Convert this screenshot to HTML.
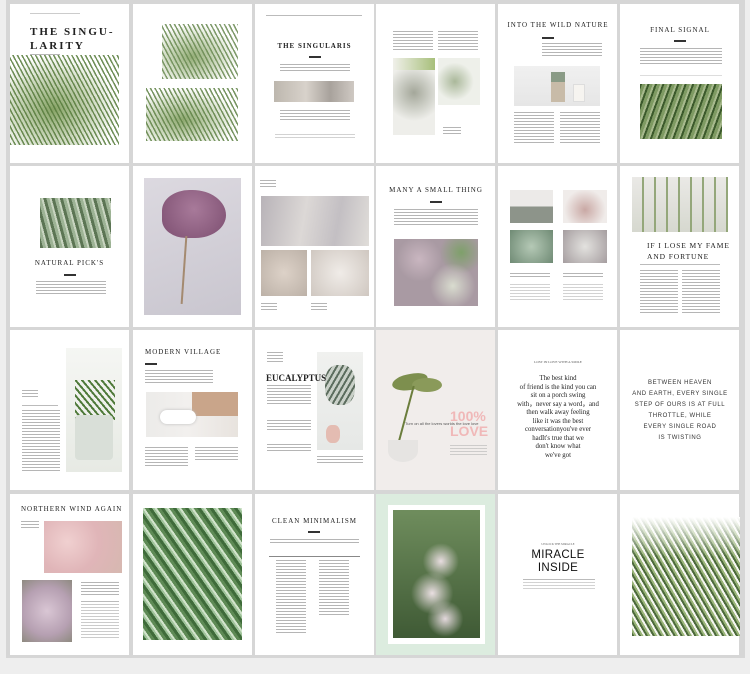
<!DOCTYPE html>
<html><head><meta charset="utf-8"><style>
*{margin:0;padding:0;box-sizing:border-box}
body{width:750px;height:689px;position:relative;background:#fff;overflow:hidden;font-family:"Liberation Serif",serif;color:#222}
div{position:absolute}
.p{background:#fff;width:119px}
.t{background:repeating-linear-gradient(#b5b5b5 0 1px,transparent 1px 3px)}
.b{background:#333;height:2px;width:12px}
.h{font-size:7px;letter-spacing:1px;text-align:center;white-space:nowrap;font-weight:bold}
.l{background:#bbb;height:1px}
.palm{background:
 repeating-linear-gradient(62deg,rgba(70,110,40,.85) 0 1.5px,transparent 1.5px 4px),
 radial-gradient(ellipse at 40% 60%,#7a9a55 0,#fff 70%);}
</style></head><body>
<div style="left:0;top:0;width:750px;height:674px;background:#eeeeee"></div>
<div style="left:6px;top:0;width:739px;height:658px;background:#d6d6d6"></div>

<!-- Row 1 -->
<div class="p" style="left:10px;top:4px;height:159px"></div>
<div style="left:30px;top:13px;width:50px;height:1px;background:#ccc"></div>
<div style="left:30px;top:25px;font-size:11px;letter-spacing:2px;line-height:14px;font-weight:bold">THE SINGU-<br>LARITY</div>
<div class="t" style="left:30px;top:54px;width:30px;height:2px"></div>
<div class="palm" style="left:10px;top:55px;width:109px;height:90px;opacity:.9"></div>

<div class="p" style="left:133px;top:4px;height:159px"></div>
<div class="palm" style="left:162px;top:24px;width:76px;height:55px;opacity:.8"></div>
<div class="palm" style="left:146px;top:88px;width:92px;height:53px;opacity:.85"></div>

<div class="p" style="left:255px;top:4px;height:159px"></div>
<div class="l" style="left:266px;top:15px;width:96px"></div>
<div class="h" style="left:255px;top:42px;width:119px">THE SINGULARIS</div>
<div class="b" style="left:309px;top:56px"></div>
<div class="t" style="left:280px;top:64px;width:70px;height:9px"></div>
<div style="left:274px;top:81px;width:80px;height:21px;background:linear-gradient(90deg,#bdb7ae,#d8d2cb 40%,#a8a29c 70%,#cfc9c3)"></div>
<div class="t" style="left:280px;top:110px;width:70px;height:12px"></div>
<div class="t" style="left:275px;top:134px;width:80px;height:4px;opacity:.6"></div>

<div class="p" style="left:376px;top:4px;height:159px"></div>
<div class="t" style="left:393px;top:31px;width:40px;height:20px"></div>
<div class="t" style="left:438px;top:31px;width:40px;height:20px"></div>
<div style="left:393px;top:58px;width:42px;height:77px;background:radial-gradient(circle at 50% 45%,#a4a79a 0,#c9cbc2 30%,#eeeeea 60%),#eee"></div>
<div style="left:393px;top:58px;width:42px;height:12px;background:linear-gradient(90deg,#f0f0ea,#a7bf7a)"></div>
<div style="left:438px;top:58px;width:42px;height:47px;background:radial-gradient(circle at 40% 50%,#aab89a 0,#eef0ea 55%)"></div>
<div class="t" style="left:443px;top:127px;width:18px;height:8px"></div>

<div class="p" style="left:498px;top:4px;height:159px"></div>
<div class="h" style="left:498px;top:21px;width:120px;font-weight:normal">INTO THE WILD NATURE</div>
<div class="b" style="left:542px;top:37px"></div>
<div class="t" style="left:542px;top:43px;width:60px;height:14px"></div>
<div style="left:514px;top:66px;width:86px;height:40px;background:linear-gradient(#f0f0f0,#e6e6e6)"></div>
<div style="left:551px;top:80px;width:14px;height:22px;background:#c8bba8"></div>
<div style="left:551px;top:72px;width:14px;height:10px;background:#8a9b86"></div>
<div style="left:573px;top:84px;width:12px;height:18px;background:#f6f4f0;border:1px solid #ddd"></div>
<div class="t" style="left:514px;top:112px;width:40px;height:31px"></div>
<div class="t" style="left:560px;top:112px;width:40px;height:31px"></div>

<div class="p" style="left:620px;top:4px;height:159px"></div>
<div class="h" style="left:620px;top:26px;width:120px;font-weight:normal">FINAL SIGNAL</div>
<div class="b" style="left:674px;top:40px"></div>
<div class="t" style="left:640px;top:48px;width:82px;height:16px"></div>
<div class="l" style="left:640px;top:75px;width:82px;background:#ddd"></div>
<div style="left:640px;top:84px;width:82px;height:55px;background:repeating-linear-gradient(110deg,#3c5a2c 0 2px,#7e9a62 2px 5px,#a7b98d 5px 7px)"></div>

<!-- Row 2 -->
<div class="p" style="left:10px;top:166px;height:161px"></div>
<div style="left:40px;top:198px;width:71px;height:50px;background:repeating-linear-gradient(75deg,#5c7554 0 3px,#9db395 3px 6px,#c8d4c0 6px 8px)"></div>
<div class="h" style="left:10px;top:259px;width:119px;font-weight:normal">NATURAL PICK'S</div>
<div class="b" style="left:64px;top:274px"></div>
<div class="t" style="left:36px;top:281px;width:70px;height:14px"></div>

<div class="p" style="left:133px;top:166px;height:161px"></div>
<div style="left:144px;top:178px;width:97px;height:137px;background:linear-gradient(160deg,#dcd9e0,#c9c6cf)"></div>
<div style="left:162px;top:190px;width:64px;height:48px;border-radius:45% 55% 50% 40%;background:radial-gradient(circle at 50% 40%,#a87a9a,#7c4e70)"></div>
<div style="left:183px;top:236px;width:2px;height:68px;background:#a48a70;transform:rotate(4deg)"></div>

<div class="p" style="left:255px;top:166px;height:161px"></div>
<div class="t" style="left:260px;top:180px;width:16px;height:8px"></div>
<div style="left:261px;top:196px;width:108px;height:50px;background:linear-gradient(100deg,#b8b3b8,#dcd8d6 40%,#c3bfc3 70%,#e0ddd9)"></div>
<div style="left:261px;top:250px;width:46px;height:46px;background:radial-gradient(circle,#ddd2c8,#bcb1a7)"></div>
<div style="left:311px;top:250px;width:58px;height:46px;background:radial-gradient(circle,#f0ece8,#cfc7c0)"></div>
<div class="t" style="left:261px;top:303px;width:16px;height:8px"></div>
<div class="t" style="left:311px;top:303px;width:16px;height:8px"></div>

<div class="p" style="left:376px;top:166px;height:161px"></div>
<div class="h" style="left:376px;top:186px;width:120px;font-weight:normal">MANY A SMALL THING</div>
<div class="b" style="left:430px;top:201px"></div>
<div class="t" style="left:394px;top:209px;width:84px;height:18px"></div>
<div style="left:394px;top:239px;width:84px;height:67px;background:radial-gradient(circle at 30% 30%,#c9b6c0 0,transparent 30%),radial-gradient(circle at 70% 70%,#d9dccf 0,transparent 30%),radial-gradient(circle at 80% 20%,#7ea06a 0,transparent 25%),#a99aa3"></div>

<div class="p" style="left:498px;top:166px;height:161px"></div>
<div style="left:510px;top:190px;width:43px;height:33px;background:linear-gradient(#eceae8 50%,#8d948a 50%)"></div>
<div style="left:563px;top:190px;width:44px;height:33px;background:radial-gradient(circle at 50% 60%,#c9a8a4,#f0ecea 70%)"></div>
<div style="left:510px;top:230px;width:43px;height:33px;background:radial-gradient(circle,#b5c9b6,#6f8a74)"></div>
<div style="left:563px;top:230px;width:44px;height:33px;background:radial-gradient(circle,#e3e2df,#a59d9f)"></div>
<div class="t" style="left:510px;top:273px;width:40px;height:5px"></div>
<div class="t" style="left:563px;top:273px;width:40px;height:5px"></div>
<div class="t" style="left:510px;top:284px;width:40px;height:16px;opacity:.6"></div>
<div class="t" style="left:563px;top:284px;width:40px;height:16px;opacity:.6"></div>

<div class="p" style="left:620px;top:166px;height:161px"></div>
<div style="left:632px;top:177px;width:96px;height:55px;background:linear-gradient(#eae9e6,#d6d8cf);"></div>
<div style="left:632px;top:177px;width:96px;height:55px;background:repeating-linear-gradient(90deg,transparent 0 10px,#94a77a 10px 12px)"></div>
<div style="left:647px;top:240px;font-size:7.5px;letter-spacing:.9px;line-height:11px">IF I LOSE MY FAME<br>AND FORTUNE</div>
<div class="l" style="left:640px;top:264px;width:80px"></div>
<div class="t" style="left:640px;top:270px;width:38px;height:43px"></div>
<div class="t" style="left:682px;top:270px;width:38px;height:43px"></div>

<!-- Row 3 -->
<div class="p" style="left:10px;top:330px;height:160px"></div>
<div style="left:66px;top:348px;width:56px;height:124px;background:linear-gradient(#f5f6f3,#e7eae4)"></div>
<div style="left:75px;top:380px;width:40px;height:40px;background:repeating-linear-gradient(50deg,#4f7a3a 0 2px,transparent 2px 5px)"></div>
<div style="left:75px;top:415px;width:38px;height:45px;background:#d9dfd8;border-radius:4px"></div>
<div class="t" style="left:22px;top:390px;width:16px;height:7px"></div>
<div class="l" style="left:22px;top:405px;width:36px"></div>
<div class="t" style="left:22px;top:410px;width:38px;height:62px"></div>

<div class="p" style="left:133px;top:330px;height:160px"></div>
<div class="h" style="left:145px;top:348px;font-weight:normal;text-align:left">MODERN VILLAGE</div>
<div class="b" style="left:145px;top:363px"></div>
<div class="t" style="left:145px;top:370px;width:68px;height:13px"></div>
<div style="left:146px;top:392px;width:92px;height:45px;background:linear-gradient(90deg,#ecebe9,#f2f0ee 45%,#e8e3de)"></div>
<div style="left:192px;top:392px;width:46px;height:24px;background:#c9a58a"></div>
<div style="left:160px;top:410px;width:36px;height:14px;background:#fff;border-radius:7px;box-shadow:0 0 3px #bbb"></div>
<div class="t" style="left:145px;top:447px;width:43px;height:20px"></div>
<div class="t" style="left:195px;top:447px;width:43px;height:14px"></div>

<div class="p" style="left:255px;top:330px;height:160px"></div>
<div class="t" style="left:267px;top:352px;width:16px;height:10px"></div>
<div style="left:317px;top:352px;width:46px;height:98px;background:linear-gradient(#f0f1ef,#e6e8e6)"></div>
<div style="left:325px;top:365px;width:30px;height:40px;background:repeating-linear-gradient(120deg,#5d6e5f 0 2px,#c9d0c8 2px 5px);border-radius:40%"></div>
<div style="left:326px;top:425px;width:14px;height:18px;background:#e4bcb2;border-radius:40%"></div>
<div style="left:266px;top:373px;font-size:9px;font-weight:bold">EUCALYPTUS</div>
<div class="t" style="left:267px;top:385px;width:44px;height:21px"></div>
<div class="t" style="left:267px;top:420px;width:44px;height:10px"></div>
<div class="t" style="left:267px;top:444px;width:44px;height:8px"></div>
<div class="t" style="left:317px;top:456px;width:46px;height:8px"></div>

<div class="p" style="left:376px;top:330px;height:160px;background:#f1edeb"></div>
<div style="left:392px;top:374px;width:36px;height:16px;background:#7d8f4e;border-radius:60% 40% 50% 50%;transform:rotate(-8deg)"></div>
<div style="left:412px;top:378px;width:30px;height:14px;background:#8a9a5a;border-radius:50%"></div>
<div style="left:405px;top:385px;width:2px;height:60px;background:#6b7d3c;transform:rotate(15deg)"></div>
<div style="left:388px;top:440px;width:30px;height:22px;border-radius:0 0 50% 50%;background:#e6e4e2"></div>
<div style="left:450px;top:409px;font-family:'Liberation Sans',sans-serif;font-weight:bold;font-size:14px;line-height:15px;color:#f0b8b8">100%<br>LOVE</div>
<div style="left:405px;top:421px;font-family:'Liberation Sans',sans-serif;font-size:4px;color:#555;white-space:nowrap">Turn on all the lovers worlds the love love</div>
<div class="t" style="left:450px;top:445px;width:37px;height:10px;opacity:.6"></div>

<div class="p" style="left:498px;top:330px;height:160px"></div>
<div style="left:498px;top:360px;width:120px;text-align:center;font-size:3.5px;color:#555">LOST IN LOVE WITH A SMILE</div>
<div style="left:498px;top:375px;width:120px;text-align:center;font-size:6.8px;line-height:8.5px;color:#222">The best kind<br>of friend is the kind you can<br>sit on a porch swing<br>with，never say a word，and<br>then walk away feeling<br>like it was the best<br>conversationyou've ever<br>hadIt's true that we<br>don't know what<br>we've got</div>

<div class="p" style="left:620px;top:330px;height:160px"></div>
<div style="left:620px;top:378px;width:120px;text-align:center;font-family:'Liberation Sans',sans-serif;font-size:6px;letter-spacing:.6px;line-height:11px;color:#333">BETWEEN HEAVEN<br>AND EARTH, EVERY SINGLE<br>STEP OF OURS IS AT FULL<br>THROTTLE, WHILE<br>EVERY SINGLE ROAD<br>IS TWISTING</div>

<!-- Row 4 -->
<div class="p" style="left:10px;top:494px;height:161px"></div>
<div class="h" style="left:21px;top:505px;font-weight:normal;text-align:left">NORTHERN WIND AGAIN</div>
<div class="t" style="left:21px;top:521px;width:18px;height:8px"></div>
<div style="left:44px;top:521px;width:78px;height:52px;background:radial-gradient(circle at 30% 40%,#f0d0d0,#e0b5b8 50%,#d6b8b0)"></div>
<div style="left:22px;top:580px;width:50px;height:62px;background:radial-gradient(circle at 50% 50%,#d9c6d4,#b6a0b2 60%,#8e8a80)"></div>
<div class="t" style="left:81px;top:582px;width:38px;height:14px"></div>
<div class="l" style="left:81px;top:601px;width:38px"></div>
<div class="t" style="left:81px;top:604px;width:38px;height:36px;opacity:.7"></div>

<div class="p" style="left:133px;top:494px;height:161px"></div>
<div style="left:143px;top:508px;width:99px;height:132px;background:repeating-linear-gradient(55deg,#3f6b3a 0 3px,#9fc39a 3px 5px,#d2e4cc 5px 7px,#5e8a55 7px 10px)"></div>

<div class="p" style="left:255px;top:494px;height:161px"></div>
<div class="h" style="left:255px;top:517px;width:119px;font-weight:normal">CLEAN MINIMALISM</div>
<div class="b" style="left:308px;top:531px"></div>
<div class="t" style="left:270px;top:539px;width:89px;height:5px"></div>
<div class="l" style="left:269px;top:556px;width:91px;background:#888"></div>
<div class="t" style="left:276px;top:560px;width:30px;height:75px"></div>
<div class="t" style="left:319px;top:560px;width:30px;height:55px"></div>

<div class="p" style="left:376px;top:494px;height:161px;background:#dcecdf"></div>
<div style="left:388px;top:505px;width:97px;height:139px;background:#fff"></div>
<div style="left:393px;top:510px;width:87px;height:128px;background:radial-gradient(circle at 55% 40%,#e8dde0 0,transparent 20%),radial-gradient(circle at 45% 65%,#eadfe2 0,transparent 22%),radial-gradient(circle at 60% 85%,#e3d8dc 0,transparent 15%),linear-gradient(#6f8d5d,#3f5a35)"></div>

<div class="p" style="left:498px;top:494px;height:161px"></div>
<div style="left:498px;top:542px;width:120px;text-align:center;font-size:3px;color:#666">UNLOCK THE MIRACLE</div>
<div style="left:498px;top:549px;width:120px;text-align:center;font-family:'Liberation Sans',sans-serif;font-size:11.5px;line-height:13px;letter-spacing:.3px;color:#111">MIRACLE<br>INSIDE</div>
<div class="l" style="left:523px;top:579px;width:72px"></div>
<div class="t" style="left:523px;top:582px;width:72px;height:7px;opacity:.6"></div>

<div class="p" style="left:620px;top:494px;height:161px"></div>
<div style="left:632px;top:517px;width:108px;height:119px;background:repeating-linear-gradient(60deg,#3a5a28 0 2px,#8fac6a 2px 4px,#f4f6f0 4px 6px),#fff;opacity:.9"></div>
<div style="left:632px;top:517px;width:108px;height:40px;background:linear-gradient(#fff,rgba(255,255,255,0))"></div>
</body></html>
